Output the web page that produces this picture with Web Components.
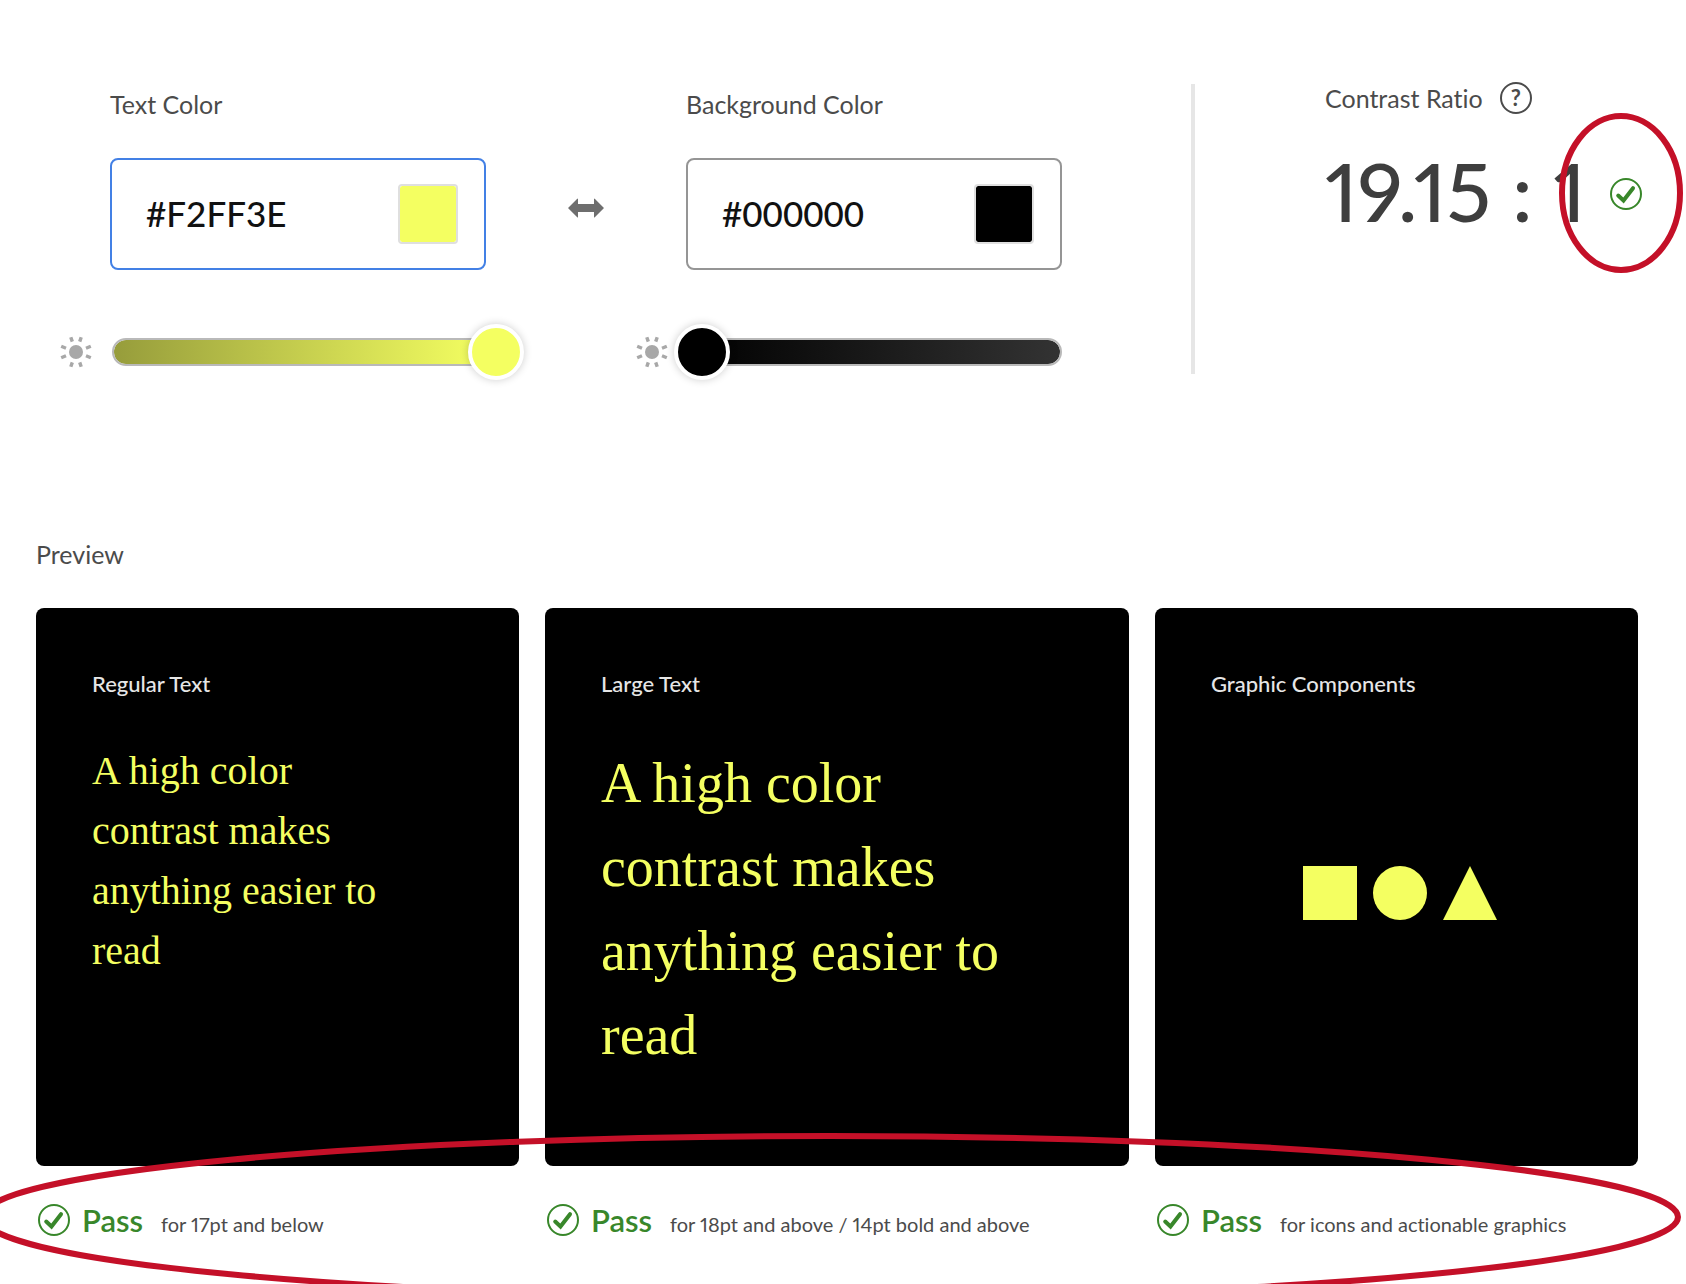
<!DOCTYPE html>
<html lang="en">
<head>
<meta charset="utf-8">
<title>Contrast checker</title>
<style>
  body { margin: 0; background: #fff; color: #4b4b4b; font-family: Lato, "Liberation Sans", sans-serif; font-variant-numeric: proportional-nums; font-variant-ligatures: none; }
</style>
</head>
<body>
<contrast-checker></contrast-checker>

<template id="contrast-checker">
  <style>
    :host { display: block; }
    main { position: relative; min-height: 100vh; overflow: hidden; box-sizing: border-box; padding-top: 82px; }
    .controls { display: grid; grid-template-columns: minmax(0, 1fr) 150px minmax(0, 1fr) 263px 361px; align-items: start; padding-left: 60px; }
    color-field { margin-top: 7px; }
    swap-button { margin: 110px 0 0 50px; }
    .divider { margin: 2px 0 0 129px; width: 4px; height: 290px; background: #e6e6e6; }
    .preview { position: relative; padding: 159px 48px 0 36px; }
    h2 { margin: 0 0 39px; font-size: 25px; line-height: 30px; font-weight: 400; }
    .cards { display: grid; grid-template-columns: 483fr 584fr 483fr; gap: 26px; }
    highlight-ring { position: absolute; left: -21px; right: 5px; bottom: -63px; height: 168px; }
  </style>
  <main>
    <section class="controls">
      <color-field label="Text Color" hex="#F2FF3E" swatch="#f4ff61" from="#969c3b" to="#f4ff61" level="100" active></color-field>
      <swap-button></swap-button>
      <color-field label="Background Color" hex="#000000" swatch="#000000" from="#000000" to="#333333" level="0"></color-field>
      <div class="divider"></div>
      <contrast-ratio>19.15 : 1</contrast-ratio>
    </section>
    <section class="preview">
      <h2>Preview</h2>
      <div class="cards">
        <preview-card heading="Regular Text">
          <sample-text>A high color contrast makes anything easier to read</sample-text>
          <span slot="note">for 17pt and below</span>
        </preview-card>
        <preview-card heading="Large Text">
          <sample-text large>A high color contrast makes anything easier to read</sample-text>
          <span slot="note">for 18pt and above / 14pt bold and above</span>
        </preview-card>
        <preview-card heading="Graphic Components">
          <sample-shapes></sample-shapes>
          <span slot="note">for icons and actionable graphics</span>
        </preview-card>
      </div>
      <highlight-ring></highlight-ring>
    </section>
  </main>
</template>

<template id="color-field">
  <style>
    :host { display: grid; grid-template-columns: 32px minmax(0, 1fr); column-gap: 18px; }
    label { grid-column: 2; font-size: 25px; line-height: 30px; }
    .box { grid-column: 2; display: flex; align-items: center; box-sizing: border-box; height: 112px; margin-top: 39px; padding: 0 26px 0 34px; border: 2px solid #959595; border-radius: 8px; }
    :host([active]) .box { border-color: #4380e5; }
    .hex { flex: 1; min-width: 0; padding: 0 0 2px; border: 0; outline: 0; background: none; color: #111; font: inherit; font-size: 35px; line-height: 42px; font-weight: 500; font-variant-numeric: tabular-nums; }
    .swatch { appearance: none; flex: none; box-sizing: border-box; width: 60px; height: 60px; padding: 0; border: 2px solid #dfdfdf; border-radius: 4px; background: none; }
    .swatch::-webkit-color-swatch-wrapper { padding: 0; }
    .swatch::-webkit-color-swatch { border: 0; border-radius: 2px; }
    .sun { margin-top: 66px; width: 32px; height: 32px; }
    .slider { display: grid; align-items: center; margin-top: 54px; }
    .slider > * { grid-area: 1 / 1; }
    .track { height: 28px; box-sizing: border-box; margin-left: 2px; border: 2px solid #b9b9b9; border-radius: 14px; background: linear-gradient(90deg, var(--from), var(--to)) border-box; background-clip: padding-box; }
    .range { appearance: none; height: 56px; margin: 0 -38px 0 -12px; background: none; outline: 0; }
    .range::-webkit-slider-thumb { appearance: none; box-sizing: border-box; width: 56px; height: 56px; border: 4px solid #fff; border-radius: 50%; background: var(--swatch); box-shadow: 0 0 8px rgba(0, 0, 0, .2); }
  </style>
  <label for="hex"></label>
  <div class="box">
    <input class="hex" id="hex" type="text" spellcheck="false">
    <input class="swatch" type="color" aria-label="Pick a color">
  </div>
  <svg class="sun" viewBox="0 0 32 32" aria-hidden="true">
    <circle cx="16" cy="16" r="7" fill="#a8a8a8"/>
    <path d="M12.3 5.6 10.8 1.2M19.7 5.6 21.2 1.2M26 12.2 30.8 10.2M26 19.8 30.8 21.8M19.7 26.4 21.2 30.8M12.3 26.4 10.8 30.8M6 19.8 1.2 21.8M6 12.2 1.2 10.2" stroke="#a8a8a8" stroke-width="3.4"/>
  </svg>
  <div class="slider">
    <div class="track"></div>
    <input class="range" type="range" min="0" max="100" aria-label="Brightness">
  </div>
</template>

<template id="swap-button">
  <style>
    :host { display: flex; justify-content: center; }
    button { padding: 0; border: 0; background: none; display: block; height: 32px; }
    svg { display: block; }
  </style>
  <button aria-label="Swap colors"><svg width="36" height="20" viewBox="0 0 36 20"><path d="M0 10 9 1Q10 0 10 1V6H26V1Q26 0 27 1L36 10 27 19Q26 20 26 19V14H10V19Q10 20 9 19Z" fill="#6e6e6e"/></svg></button>
</template>

<template id="contrast-ratio">
  <style>
    :host { display: block; }
    .head, .value { display: flex; align-items: center; }
    .head { gap: 17px; font-size: 25px; line-height: 30px; }
    button { box-sizing: border-box; width: 32px; height: 32px; padding: 0; border: 2px solid #4b4b4b; border-radius: 50%; background: none; color: #4b4b4b; font: inherit; font-size: 22px; line-height: 26px; font-weight: 700; }
    .value { gap: 24px; margin-top: 28px; color: #3e3e3e; font-size: 82px; line-height: 96px; font-weight: 500; }
    .mark { position: relative; margin-top: 8px; }
    highlight-ring { position: absolute; width: 124px; height: 160px; left: -51px; top: -65px; }
  </style>
  <div class="head"><span>Contrast Ratio</span><button aria-label="About contrast ratio">?</button></div>
  <div class="value"><span><slot></slot></span><div class="mark"><check-icon></check-icon><highlight-ring></highlight-ring></div></div>
</template>

<template id="check-icon">
  <style>:host { display: block; flex: none; width: 32px; height: 32px; } svg { display: block; }</style>
  <svg width="32" height="32" viewBox="0 0 32 32" fill="none" stroke="#38872a" aria-hidden="true"><circle cx="16" cy="16" r="15" stroke-width="2"/><path d="M8.2 17.5 13.5 22.5 23 10.2" stroke-width="4" stroke-linecap="round"/></svg>
</template>

<template id="highlight-ring">
  <style>
    :host { display: block; pointer-events: none; }
    svg { display: block; width: 100%; height: 100%; }
    ellipse { cx: 50%; cy: 50%; rx: calc(50% - 3px); ry: calc(50% - 3px); }
  </style>
  <svg aria-hidden="true"><ellipse fill="none" stroke="#c41028" stroke-width="6"/></svg>
</template>

<template id="preview-card">
  <style>
    :host { display: block; min-width: 0; }
    .card { display: flex; flex-direction: column; box-sizing: border-box; min-height: 558px; padding: 63px 48px 78px 56px; border-radius: 8px; background: #000; }
    h3 { margin: 0 0 44px; color: #e6e6e6; font-size: 22px; line-height: 26px; font-weight: 500; }
    .verdict { display: flex; align-items: center; gap: 12px; margin-top: 36px; padding-left: 2px; }
    p { display: flex; align-items: baseline; gap: 18px; margin: 0; font-size: 20px; line-height: 24px; white-space: nowrap; }
    strong { color: #38872a; font-size: 31px; line-height: 36px; font-weight: 600; }
  </style>
  <div class="card"><h3></h3><slot></slot></div>
  <div class="verdict"><check-icon></check-icon><p><strong>Pass</strong><slot name="note"></slot></p></div>
</template>

<template id="sample-text">
  <style>
    :host { display: block; max-width: calc(100% - 56px); color: #f4ff61; font: 40px/60px "Liberation Serif", serif; }
    :host([large]) { font-size: 56px; line-height: 84px; }
  </style>
  <slot></slot>
</template>

<template id="sample-shapes">
  <style>
    :host { display: flex; flex: 1; align-items: center; justify-content: center; margin-top: -44px; }
  </style>
  <svg width="196" height="54" viewBox="0 0 196 54" fill="#f4ff61" aria-hidden="true"><path d="M0 0H54V54H0Z"/><circle cx="97" cy="27" r="27"/><path d="M167 0 194 54H140Z"/></svg>
</template>

<script>
  class Base extends HTMLElement {
    constructor() {
      super();
      const template = document.getElementById(this.localName);
      this.attachShadow({ mode: 'open' }).append(template.content.cloneNode(true));
    }
    find(selector) { return this.shadowRoot.querySelector(selector); }
  }

  customElements.define('highlight-ring', class extends Base {});
  customElements.define('check-icon', class extends Base {});
  customElements.define('swap-button', class extends Base {});
  customElements.define('sample-text', class extends Base {});
  customElements.define('sample-shapes', class extends Base {});
  customElements.define('contrast-ratio', class extends Base {});

  customElements.define('preview-card', class extends Base {
    connectedCallback() { this.find('h3').textContent = this.getAttribute('heading'); }
  });

  customElements.define('color-field', class extends Base {
    connectedCallback() {
      this.find('label').textContent = this.getAttribute('label');
      this.find('.hex').value = this.getAttribute('hex');
      this.find('.swatch').value = this.getAttribute('swatch');
      this.find('.range').value = this.getAttribute('level');
      for (const name of ['from', 'to', 'swatch']) this.style.setProperty('--' + name, this.getAttribute(name));
    }
  });

  customElements.define('contrast-checker', class extends Base {});
</script>
</body>
</html>
